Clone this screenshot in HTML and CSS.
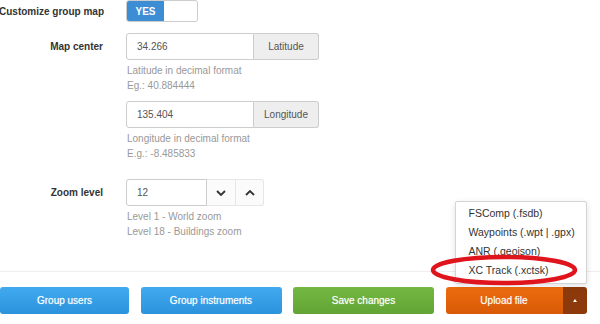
FILE: index.html
```html
<!DOCTYPE html>
<html>
<head>
<meta charset="utf-8">
<link rel="stylesheet" href="styles.css">
</head>
<body>
<div class="page">
  <form class="form">
    <div class="row row-toggle">
      <label class="label">Customize group map</label>
      <div class="control">
        <div class="toggle"><span class="toggle-on">YES</span><span class="toggle-off"></span></div>
      </div>
    </div>

    <div class="row row-center">
      <label class="label">Map center</label>
      <div class="control">
        <div class="input-group">
          <div class="input">34.266</div>
          <div class="addon">Latitude</div>
        </div>
      </div>
    </div>
    <div class="help help-lat">Latitude in decimal format<br>Eg.: 40.884444</div>

    <div class="row row-lon">
      <label class="label"></label>
      <div class="control">
        <div class="input-group">
          <div class="input">135.404</div>
          <div class="addon">Longitude</div>
        </div>
      </div>
    </div>
    <div class="help help-lon">Longitude in decimal format<br>E.g.: -8.485833</div>

    <div class="row row-zoom">
      <label class="label">Zoom level</label>
      <div class="control">
        <div class="spin">
          <div class="input spin-input">12</div>
          <div class="spin-btn"><svg width="10" height="6" viewBox="0 0 10 6"><polyline points="1,1 5,5 9,1" fill="none" stroke="#333" stroke-width="1.8"/></svg></div>
          <div class="spin-btn spin-last"><svg width="10" height="6" viewBox="0 0 10 6"><polyline points="1,5 5,1 9,5" fill="none" stroke="#333" stroke-width="1.8"/></svg></div>
        </div>
      </div>
    </div>
    <div class="help help-zoom">Level 1 - World zoom<br>Level 18 - Buildings zoom</div>
  </form>

  <hr class="rule">

  <div class="actions">
    <button class="btn btn-blue" type="button">Group users</button>
    <button class="btn btn-blue" type="button">Group instruments</button>
    <button class="btn btn-green" type="button">Save changes</button>
    <div class="btn-group">
      <button class="btn btn-orange" type="button">Upload file</button>
      <button class="btn btn-caret" type="button"><span class="caret"></span></button>
      <ul class="menu">
        <li>FSComp (.fsdb)</li>
        <li>Waypoints (.wpt | .gpx)</li>
        <li>ANR (.geojson)</li>
        <li>XC Track (.xctsk)</li>
      </ul>
      <svg class="ellipse" width="152" height="34" viewBox="0 0 152 34"><ellipse cx="76" cy="17" rx="71" ry="13" fill="none" stroke="#e0141c" stroke-width="4.5"/></svg>
    </div>
  </div>
</div>
</body>
</html>
```

FILE: styles.css
```css
* { box-sizing: border-box; }
html, body { margin: 0; padding: 0; background: #fff; }
body {
  font-family: "Liberation Sans", Arial, sans-serif;
  font-size: 10px;
  color: #333;
  width: 600px;
  height: 324px;
  overflow: hidden;
}
.page { position: relative; }
.form { display: flex; flex-direction: column; }
.row { display: flex; align-items: center; }
.label {
  width: 104px;
  margin-left: -1px;
  flex: none;
  text-align: right;
  font-weight: bold;
  font-size: 10px;
  color: #333;
  white-space: nowrap;
}
.control { margin-left: 23px; }
.row-toggle { height: 22px; }
.row-center { margin-top: 11px; }
.row-lon { margin-top: 8px; }
.row-zoom { margin-top: 18px; }

.toggle {
  display: flex;
  width: 72px;
  height: 22px;
  border: 1px solid #ccc;
  border-radius: 3px;
  overflow: hidden;
  background: #fff;
}
.toggle-on {
  width: 37px;
  background: #3c8dd4;
  color: #fff;
  font-weight: bold;
  font-size: 10px;
  display: flex;
  align-items: center;
  justify-content: center;
}
.toggle-off { flex: 1; }

.input-group { display: flex; height: 27px; }
.input {
  width: 128px;
  height: 27px;
  border: 1px solid #ccc;
  border-radius: 3px 0 0 3px;
  padding-left: 10px;
  display: flex;
  align-items: center;
  color: #555;
  font-size: 10px;
  background: #fff;
}
.addon {
  width: 65px;
  border: 1px solid #ccc;
  border-left: none;
  border-radius: 0 3px 3px 0;
  background: #eee;
  display: flex;
  align-items: center;
  justify-content: center;
  color: #555;
}
.help {
  margin-left: 127px;
  margin-top: 3px;
  line-height: 15px;
  color: #999;
  font-size: 10px;
}

.spin { display: flex; height: 27px; }
.spin-input { width: 81px; }
.spin-btn {
  width: 29px;
  height: 27px;
  border: 1px solid #e6e6e6;
  border-left: none;
  background: #fbfbfb;
  display: flex;
  align-items: center;
  justify-content: center;
}
.spin-last { width: 28px; border-radius: 0 3px 3px 0; }

.rule {
  margin: 32px 0 0 0;
  border: none;
  border-top: 1px solid #eee;
  height: 0;
}

.actions {
  margin-top: 15px;
  display: grid;
  grid-template-columns: 129px 141px 141px 141px;
  column-gap: 11.5px;
}
.btn {
  height: 27px;
  border: none;
  border-radius: 3px;
  color: #fff;
  font-family: "Liberation Sans", Arial, sans-serif;
  font-size: 10px;
  text-shadow: 0 0 1px rgba(255,255,255,0.6);
  padding: 0;
  cursor: pointer;
}
.btn-blue { background: linear-gradient(#41aaef, #2b92dc); }
.btn-green { background: linear-gradient(#74b843, #62a434); }
.btn-group { position: relative; display: flex; }
.btn-orange {
  flex: 1;
  border-radius: 3px 0 0 3px;
  background: linear-gradient(#ed6c0f, #d85a06);
}
.btn-caret {
  width: 24px;
  border-radius: 0 3px 3px 0;
  background: #8c3a0c;
  display: flex;
  align-items: center;
  justify-content: center;
}
.caret {
  width: 0; height: 0;
  border-left: 2px solid transparent;
  border-right: 2px solid transparent;
  border-bottom: 3px solid #fff;
}
.menu {
  position: absolute;
  left: 9px;
  bottom: 30px;
  width: 132px;
  margin: 0;
  padding: 2px 0 3px;
  list-style: none;
  background: #fff;
  border: 1px solid #d4d4d4;
  border-radius: 2px;
  box-shadow: 0 2px 6px rgba(0,0,0,0.12);
}
.menu li {
  height: 19px;
  line-height: 19px;
  padding-left: 13px;
  font-size: 10.5px;
  color: #333;
  white-space: nowrap;
}
.ellipse {
  position: absolute;
  left: -18px;
  top: -34px;
  width: 152px;
  height: 34px;
}
```
